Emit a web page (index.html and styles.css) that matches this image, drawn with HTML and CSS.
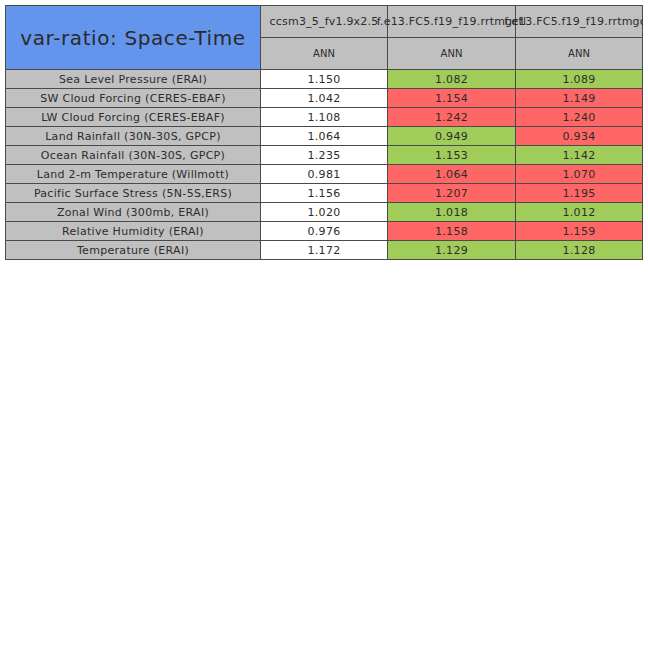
FILE: index.html
```html
<!DOCTYPE html>
<html>
<head>
<meta charset="utf-8">
<link rel="stylesheet" href="styles.css">
</head>
<body>
<div class="clip">
<table class="tbl">
  <colgroup>
    <col class="c-name"><col class="c-val"><col class="c-val2"><col class="c-val">
  </colgroup>
  <tr class="hdr">
    <th class="title" rowspan="2">var-ratio: Space-Time</th>
    <th class="case"><span>ccsm3_5_fv1.9x2.5</span></th>
    <th class="case"><span>f.e13.FC5.f19_f19.rrtmgctl</span></th>
    <th class="case"><span>f.e13.FC5.f19_f19.rrtmgctl</span></th>
  </tr>
  <tr class="hdr">
    <th class="season">ANN</th>
    <th class="season">ANN</th>
    <th class="season">ANN</th>
  </tr>
  <tr><td class="name">Sea Level Pressure (ERAI)</td><td class="w">1.150</td><td class="g">1.082</td><td class="g">1.089</td></tr>
  <tr><td class="name">SW Cloud Forcing (CERES-EBAF)</td><td class="w">1.042</td><td class="r">1.154</td><td class="r">1.149</td></tr>
  <tr><td class="name">LW Cloud Forcing (CERES-EBAF)</td><td class="w">1.108</td><td class="r">1.242</td><td class="r">1.240</td></tr>
  <tr><td class="name">Land Rainfall (30N-30S, GPCP)</td><td class="w">1.064</td><td class="g">0.949</td><td class="r">0.934</td></tr>
  <tr><td class="name">Ocean Rainfall (30N-30S, GPCP)</td><td class="w">1.235</td><td class="g">1.153</td><td class="g">1.142</td></tr>
  <tr><td class="name">Land 2-m Temperature (Willmott)</td><td class="w">0.981</td><td class="r">1.064</td><td class="r">1.070</td></tr>
  <tr><td class="name">Pacific Surface Stress (5N-5S,ERS)</td><td class="w">1.156</td><td class="r">1.207</td><td class="r">1.195</td></tr>
  <tr><td class="name">Zonal Wind (300mb, ERAI)</td><td class="w">1.020</td><td class="g">1.018</td><td class="g">1.012</td></tr>
  <tr><td class="name">Relative Humidity (ERAI)</td><td class="w">0.976</td><td class="r">1.158</td><td class="r">1.159</td></tr>
  <tr><td class="name">Temperature (ERAI)</td><td class="w">1.172</td><td class="g">1.129</td><td class="g">1.128</td></tr>
</table>
</div>
</body>
</html>
```
FILE: styles.css
```css
html, body {
  margin: 0;
  padding: 0;
  background: #ffffff;
}
body {
  padding: 5px 0 0 5px;
  font-family: "DejaVu Sans", "Liberation Sans", sans-serif;
  color: #2c2c2c;
}
.clip {
  width: 638px;
  overflow: hidden;
}
.tbl {
  border-collapse: collapse;
  table-layout: fixed;
  width: 638px;
}
.c-name { width: 255px; }
.c-val { width: 127px; }
.c-val2 { width: 128px; }
.tbl th, .tbl td {
  border: 1px solid #4a4a4a;
  padding: 0;
  text-align: center;
  font-weight: normal;
  white-space: nowrap;
}
.hdr th { height: 31px; }
.title {
  background: #6495ed;
  font-size: 20px;
  letter-spacing: 0.6px;
  color: #2a2a2a;
}
.case {
  background: #c0c0c0;
  font-size: 11px;
  letter-spacing: 0.2px;
}
.case span {
  display: flex;
  justify-content: center;
  white-space: nowrap;
}
.season {
  background: #c0c0c0;
  font-size: 10px;
}
.tbl td {
  height: 18px;
  font-size: 11px;
  letter-spacing: 0.3px;
}
.name { background: #c0c0c0; }
.w { background: #ffffff; }
.g { background: #a0cc5a; }
.r { background: #ff6666; }
```
